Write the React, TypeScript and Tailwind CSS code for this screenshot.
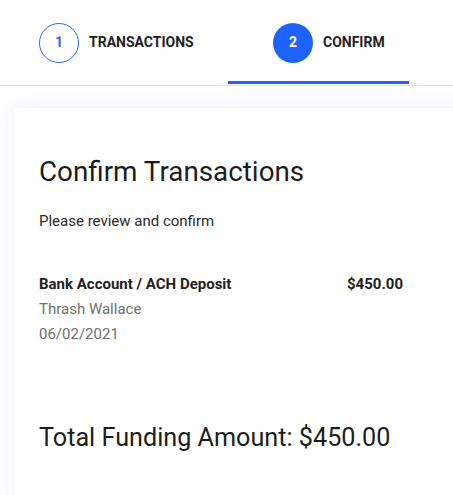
const Step = ({ n, label, active, pl, w }: { n: number; label: string; active?: boolean; pl: string; w: string }) => (
    <div className={`relative flex items-center h-[85px] ${pl} ${w}`}>
        <div
            className={`flex items-center justify-center w-10 h-10 rounded-full text-[14px] font-bold ${
                active ? 'bg-[#1f63ff] text-white' : 'border border-[#2a66ff] text-[#4a55ff]'
            }`}
        >
            {n}
        </div>
        <span className="ml-[10px] text-[14px] font-bold text-[#222]">{label}</span>
        {active ? <div className="absolute left-0 right-0 bottom-[1px] h-[3px] bg-[#1f63ff]" /> : null}
    </div>
);

export default function App() {
    return (
        <div className="w-[453px] h-[495px] overflow-hidden bg-white font-['Roboto',sans-serif]">
            <header className="flex border-b border-[#e2e2e2]">
                <Step n={1} label="TRANSACTIONS" pl="pl-[39px]" w="w-[228px]" />
                <Step n={2} label="CONFIRM" active pl="pl-[45px]" w="w-[181px]" />
            </header>
            <main className="pt-[22px] pl-[14px]">
                <section className="w-[500px] h-[400px] bg-white shadow-[0_0_18px_rgba(60,90,220,0.09)] pl-[25px] pt-[47px]">
                    <h1 className="text-[27.8px] leading-[34px] text-[#1d1d1d]">Confirm Transactions</h1>
                    <p className="mt-[22px] text-[15px] leading-[20px] text-[#2a2a2a]">Please review and confirm</p>
                    <div className="mt-[41px] w-[364px]">
                        <div className="flex justify-between text-[15px] leading-[25px] font-bold text-[#222]">
                            <span>Bank Account / ACH Deposit</span>
                            <span>$450.00</span>
                        </div>
                        <div className="text-[15px] leading-[25px] text-[#707070]">Thrash Wallace</div>
                        <div className="text-[15px] leading-[25px] text-[#707070]">06/02/2021</div>
                    </div>
                    <div className="mt-[76px] text-[25.2px] leading-[30px] text-[#1d1d1d]">Total Funding Amount: $450.00</div>
                </section>
            </main>
        </div>
    );
}
